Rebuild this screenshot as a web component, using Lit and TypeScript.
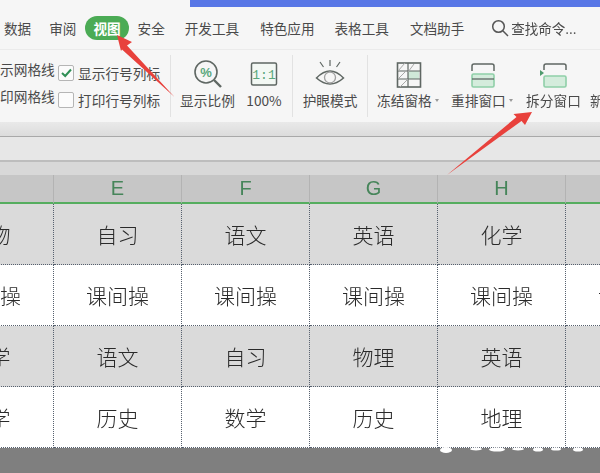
import { LitElement, html, css, svg } from "lit";
import { customElement } from "lit/decorators.js";

const TABS = [
  ["数据", 18], ["审阅", 9], ["视图", 9], ["安全", 20], ["开发工具", 21],
  ["特色应用", 20], ["表格工具", 21], ["文档助手", 0],
] as const;

const ROWS = [
  { tone: "gray", cells: ["生物", "自习", "语文", "英语", "化学", ""] },
  { tone: "white", cells: ["课间操", "课间操", "课间操", "课间操", "课间操", "课间操"] },
  { tone: "gray", cells: ["数学", "语文", "自习", "物理", "英语", ""] },
  { tone: "white", cells: ["数学", "历史", "数学", "历史", "地理", ""] },
];

const green = "#8fcfa8";
const line = "#5f6763";

@customElement("app-root")
export class AppRoot extends LitElement {
  static styles = css`
    :host { display: block; width: 600px; height: 473px; overflow: hidden; position: relative;
      background: #7f7f7f; font-family: "Noto Sans CJK SC", "Liberation Sans", sans-serif; }
    .soft { filter: blur(0.45px); height: 473px; display: flex; flex-direction: column; }
    .tabs { height: 50px; box-sizing: border-box; background: #f6f6f6; border-bottom: 1px solid #ebebeb;
      display: flex; align-items: center; padding: 6px 0 0 4px; font-size: 13.6px; color: #4a4a4a; position: relative; white-space: nowrap; }
    .bluebar { position: absolute; left: 190px; right: 0; top: 0; height: 7px; background: #5877e6; }
    .tab { line-height: 24px; }
    .tab.on { background: #4bab55; color: #fff; border-radius: 12px; padding: 0 8px; font-weight: 700; }
    .search { display: flex; align-items: center; gap: 2px; margin-left: 27px; font-size: 13.5px; }
    .ribbon { height: 72px; box-sizing: border-box; background: #f6f6f6; display: flex; padding-top: 5px; font-size: 13.7px; color: #4a4a4a; white-space: nowrap; }
    .sep { width: 1px; height: 62px; background: #e2e2e2; flex: none; }
    .checks { width: 170px; flex: none; display: grid; grid-template-columns: 58px 1fr; grid-auto-rows: 27px; padding-top: 3px; box-sizing: border-box; align-content: start; margin-top: 1px; }
    .check { display: flex; align-items: center; gap: 4px; }
    .box { width: 14px; height: 14px; border: 1px solid #b5b5b5; border-radius: 2px; background: #fbfbfb; display: flex; align-items: center; justify-content: center; }
    .tool { display: flex; flex-direction: column; align-items: center; flex: none; }
    .tool svg { display: block; height: 32px; margin-top: 3px; }
    .tool span { display: flex; align-items: center; line-height: 20px; margin-top: 0; }
    .caret { width: 0; height: 0; border: 2.5px solid transparent; border-top: 3px solid #999; border-bottom: 0; margin-left: 3px; }
    .t1 { width: 55px; margin-left: 9px; }
    .t2 { width: 36px; margin-left: 11px; margin-right: 10px; }
    .t3 { width: 54px; margin-left: 10px; margin-right: 10px; }
    .t4 { width: 62px; margin-left: 9px; align-items: flex-start; }
    .t4 svg { margin-left: 18px; }
    .t5 { width: 62px; margin-left: 12px; align-items: flex-start; }
    .t5 svg { margin-left: 19px; }
    .t6 { width: 55px; margin-left: 13px; }
    .t7 { width: 20px; margin-left: 9px; align-items: flex-start; }
    .band { height: 15px; box-sizing: border-box; background: linear-gradient(#e9e9e9, #dcdcdc); border-bottom: 1px solid #a9a9a9; }
    .formula { height: 25px; box-sizing: border-box; background: #e7e7e7; border-bottom: 2px solid #bdbdbd; }
    .gap { height: 13px; background: #d8d8d8; }
    .grid { display: grid; grid-template-columns: repeat(6, 128px); margin-left: -74px; width: 768px; flex: none; }
    .head { height: 29px; box-sizing: border-box; background: #c6c6c6; border-bottom: 2px solid #55ad5f; border-right: 1px solid #b3b3b3;
      display: flex; align-items: center; justify-content: center; color: #46855a; font-size: 20px; font-family: "Liberation Sans", sans-serif; }
    .cell { height: 61px; box-sizing: border-box; border-right: 1px dotted #56606e; border-bottom: 1px dotted #56606e;
      display: flex; align-items: center; justify-content: center; font-size: 21px; font-weight: 300; color: #2a2a2a; white-space: nowrap; }
    .gray { background: #dadada; }
    .white { background: #fff; }
    .rest { flex: 1; background: #7f7f7f; }
    .over { position: absolute; left: 0; top: 0; width: 600px; height: 473px; pointer-events: none; }
  `;

  private freeze() {
    return svg`<svg width="28" height="32" viewBox="0 0 28 32" fill="none">
      <rect x="13" y="13" width="11" height="8" fill="#cfe8d8"/>
      <rect x="2.5" y="5" width="23" height="24" stroke="${line}" stroke-width="1.6"/>
      <path d="M2 13H26M2 21H26M13 5V29" stroke="${line}" stroke-width="1.2"/>
      <path d="M3 13L10 5M3 21L13 11M5 29L13 21M13 14L19 6" stroke="#a8a8a8" stroke-width="1"/>
      </svg>`;
  }
  private panes() {
    return svg`<svg width="26" height="32" viewBox="0 0 26 32" fill="none">
      <path d="M2 13V8Q2 6 4 6H22Q24 6 24 8V13" stroke="${line}" stroke-width="1.5"/>
      <rect x="2" y="16" width="22" height="13" rx="1.5" fill="#d4ecdc" stroke="${green}" stroke-width="1.6"/>
      <path d="M2 21H24" stroke="${line}" stroke-width="1.3"/>
      </svg>`;
  }
  private split() {
    return svg`<svg width="32" height="32" viewBox="0 0 32 32" fill="none">
      <path d="M6 12V8Q6 6 8 6H26Q28 6 28 8V12" stroke="${line}" stroke-width="1.5"/>
      <rect x="6" y="18" width="22" height="11" rx="1.5" fill="#d4ecdc" stroke="${green}" stroke-width="1.6"/>
      <path d="M2 12L6 15L2 18Z" fill="#4f9a6d"/>
      </svg>`;
  }

  render() {
    const head = ["", "E", "F", "G", "H", ""];
    return html`
      <div class="soft">
        <div class="tabs">
          <div class="bluebar"></div>
          ${TABS.map(([t, gap]) => html`<div class="tab ${t === "视图" ? "on" : ""}" style="margin-right:${gap}px">${t}</div>`)}
          <div class="search">
            <svg width="18" height="18" viewBox="0 0 18 18" fill="none" stroke="#555" stroke-width="1.5">
              <circle cx="7.5" cy="7.5" r="5.8"/><path d="M11.8 11.8L17 17"/></svg>
            查找命令...
          </div>
        </div>
        <div class="ribbon">
          <div class="checks">
            <div>示网格线</div>
            <div class="check"><div class="box"><svg width="11" height="10" viewBox="0 0 11 10" fill="none" stroke="#2f8f55" stroke-width="2"><path d="M1 5L4.2 8L10 1.5"/></svg></div>显示行号列标</div>
            <div>印网格线</div>
            <div class="check"><div class="box"></div>打印行号列标</div>
          </div>
          <div class="sep"></div>
          <div class="tool t1">
            <svg width="30" height="32" viewBox="0 0 30 32" fill="none">
              <circle cx="13" cy="14" r="11" stroke="${line}" stroke-width="1.6"/>
              <path d="M21 22L28 29" stroke="${line}" stroke-width="2.4"/>
              <text x="13" y="19" font-size="13" font-weight="700" fill="#5aa77c" text-anchor="middle" font-family="Liberation Sans">%</text>
            </svg>
            <span>显示比例</span>
          </div>
          <div class="tool t2">
            <svg width="28" height="32" viewBox="0 0 28 32" fill="none">
              <rect x="1.5" y="5" width="25" height="22" rx="1.5" fill="#f3f8f4" stroke="${line}" stroke-width="1.5"/>
              <text x="14" y="21" font-size="13" fill="#5aa77c" text-anchor="middle" font-family="Liberation Mono">1:1</text>
            </svg>
            <span>100%</span>
          </div>
          <div class="sep"></div>
          <div class="tool t3">
            <svg width="30" height="32" viewBox="0 0 30 32" fill="none" stroke="${line}">
              <path d="M15 2V8M5 4L8.5 9M25 4L21.5 9" stroke-width="1.2"/>
              <path d="M1.5 20Q15 6 28.5 20Q15 32 1.5 20Z" stroke-width="1.5"/>
              <circle cx="15" cy="19.5" r="5.5" stroke="#a0a0a0" stroke-width="1.3"/>
            </svg>
            <span>护眼模式</span>
          </div>
          <div class="sep"></div>
          <div class="tool t4">${this.freeze()}<span>冻结窗格<i class="caret"></i></span></div>
          <div class="tool t5">${this.panes()}<span>重排窗口<i class="caret"></i></span></div>
          <div class="tool t6">${this.split()}<span>拆分窗口</span></div>
          <div class="tool t7"><svg width="1" height="32"></svg><span>新建窗口</span></div>
        </div>
        <div class="band"></div>
        <div class="formula"></div>
        <div class="gap"></div>
        <div class="grid">
          ${head.map((h) => html`<div class="head">${h}</div>`)}
          ${ROWS.map((r) => r.cells.map((c) => html`<div class="cell ${r.tone}">${c}</div>`))}
        </div>
        <div class="rest"></div>
      </div>
      <svg class="over" viewBox="0 0 600 473">
        <path d="M117 35L132 42L127 45.5L174.5 97L122 49.5L121 51Z" fill="#e8413c"/>
        <path d="M532 112L525 125L521.5 121L447 175L516.5 117L513.5 114Z" fill="#e8413c"/>
        <g fill="#fff">
          <ellipse cx="446" cy="450" rx="6" ry="3"/>
          <ellipse cx="476" cy="449" rx="6" ry="1.5"/>
          <ellipse cx="497" cy="449.5" rx="8" ry="2"/>
          <ellipse cx="518" cy="449" rx="6" ry="1.5"/>
          <ellipse cx="538" cy="449.5" rx="5" ry="2"/>
          <ellipse cx="556" cy="449" rx="5" ry="1.5"/>
          <ellipse cx="578" cy="449.5" rx="5" ry="2"/>
        </g>
      </svg>
    `;
  }
}
